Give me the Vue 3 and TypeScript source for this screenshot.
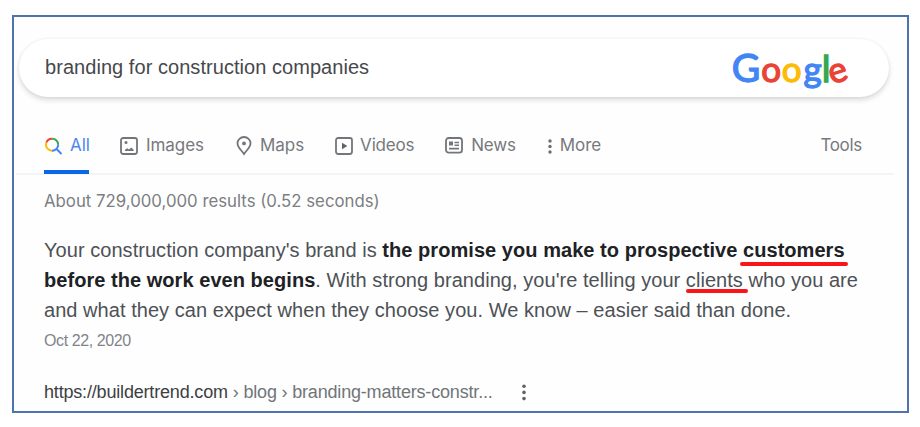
<script setup lang="ts">
interface Tab {
  id: string
  label: string
}

const query = 'branding for construction companies'

const tabs: Tab[] = [
  { id: 'all', label: 'All' },
  { id: 'images', label: 'Images' },
  { id: 'maps', label: 'Maps' },
  { id: 'videos', label: 'Videos' },
  { id: 'news', label: 'News' },
  { id: 'more', label: 'More' },
]
const active = 'all'

const logo: { ch: string; tone: string }[] = [
  { ch: 'G', tone: 'blue big' },
  { ch: 'o', tone: 'red' },
  { ch: 'o', tone: 'yellow' },
  { ch: 'g', tone: 'blue wide' },
  { ch: 'l', tone: 'green slim' },
  { ch: 'e', tone: 'red tilt' },
]
</script>

<template>
  <main class="frame">
    <header class="search">
      <span class="query">{{ query }}</span>
      <span class="logo"><span v-for="(l, i) in logo" :key="i" class="letter" :class="l.tone">{{ l.ch }}</span></span>
    </header>

    <nav class="tabs">
      <a v-for="t in tabs" :key="t.id" class="tab" :class="[t.id, { active: t.id === active }]">
        <svg v-if="t.id === 'all'" class="icon" width="18" height="18" viewBox="0 0 18 18" fill="none" stroke-width="2">
          <path d="M3.6 11.7A6 6 0 0 1 2.4 5.5" stroke="#fbbc04" />
          <path d="M2.4 5.5A6 6 0 0 1 8.2 1.7" stroke="#ea4335" />
          <path d="M8.2 1.7A6 6 0 0 1 14.2 7.7" stroke="#34a853" />
          <path d="M3.6 11.7A6 6 0 0 0 8 13.7" stroke="#fbbc04" />
          <path d="M8 13.7A6 6 0 0 0 14.2 7.7M12.3 11.8L17.5 17" stroke="#4285f4" />
        </svg>
        <svg v-else-if="t.id === 'images'" class="icon" width="18" height="18" viewBox="0 0 18 18">
          <rect x="1" y="1" width="16" height="16" rx="2.2" fill="none" stroke="#72767b" stroke-width="1.8" />
          <circle cx="6" cy="5.6" r="1.5" fill="#72767b" />
          <path d="M5 14V12.8L7.2 11.2L9 12.4L11.3 10.6L13.6 12.8V14Z" fill="#72767b" />
        </svg>
        <svg v-else-if="t.id === 'maps'" class="icon" width="16" height="20" viewBox="0 0 16 20">
          <path d="M8 18C5.8 14.3 1.5 11.8 1.5 7.3A6.5 6.3 0 0 1 14.5 7.3C14.5 11.8 10.2 14.3 8 18Z" fill="none" stroke="#72767b" stroke-width="1.8" />
          <circle cx="8" cy="7.4" r="1.9" fill="#72767b" />
        </svg>
        <svg v-else-if="t.id === 'videos'" class="icon" width="18" height="18" viewBox="0 0 18 18">
          <rect x="1" y="1" width="16" height="16" rx="2.2" fill="none" stroke="#72767b" stroke-width="1.8" />
          <path d="M7 5.8V12.2L12.3 9Z" fill="#5f6368" />
        </svg>
        <svg v-else-if="t.id === 'news'" class="icon" width="18" height="17" viewBox="0 0 18 17">
          <rect x="1" y="1" width="16" height="14.6" rx="2.6" fill="none" stroke="#72767b" stroke-width="1.8" />
          <path d="M4 4.6H8V8.6H4ZM9.5 4.8H14V6.2H9.5ZM9.5 7.6H14V9H9.5ZM4 10.8H14V12.4H4Z" fill="#72767b" />
        </svg>
        <svg v-else class="icon" width="4" height="15" viewBox="0 0 4 15" fill="#6b6f74">
          <circle cx="2" cy="2" r="1.7" /><circle cx="2" cy="7.5" r="1.7" /><circle cx="2" cy="13" r="1.7" />
        </svg>
        <span class="label">{{ t.label }}</span>
      </a>
      <a class="tools">Tools</a>
    </nav>

    <p class="stats">About 729,000,000 results (0.52 seconds)</p>

    <section class="snippet">
      <div class="line"><span>Your construction company's brand is </span><b>the promise you make to prospective <mark class="customers">customers</mark></b></div>
      <div class="line"><b>before the work even begins</b><span>. With strong branding, you're telling your <mark class="clients">clients</mark> who you are</span></div>
      <div class="line"><span>and what they can expect when they choose you. We know – easier said than done.</span></div>
    </section>
    <p class="date">Oct 22, 2020</p>

    <footer class="source">
      <span class="host">https://buildertrend.com</span>
      <span class="crumbs">› blog › branding-matters-constr...</span>
      <svg class="kebab" width="4" height="17" viewBox="0 0 4 17" fill="#5f6368">
        <circle cx="2" cy="2.2" r="1.8" /><circle cx="2" cy="8.4" r="1.8" /><circle cx="2" cy="14.6" r="1.8" />
      </svg>
    </footer>
  </main>
</template>

<style>
body {
  background: #fff;
}
</style>

<style scoped>
.frame {
  box-sizing: border-box;
  width: 897px;
  height: 398px;
  margin: 15px 0 0 12px;
  border: 2px solid #4f74ad;
  background: #fefefe;
  font-family: "Liberation Sans", Arial, sans-serif;
  white-space: nowrap;
  overflow: hidden;
}
p {
  margin: 0;
}
.search {
  box-sizing: border-box;
  display: flex;
  align-items: center;
  justify-content: space-between;
  width: 870px;
  height: 58px;
  margin: 22px 0 0 5px;
  padding: 0 41px 0 26px;
  border-radius: 29px;
  background: #fff;
  box-shadow: 0 3px 5px rgba(64, 60, 67, 0.18), 0 0 3px rgba(64, 60, 67, 0.07);
}
.query {
  font-size: 20px;
  letter-spacing: 0.05px;
  color: #46484c;
  padding-bottom: 2px;
}
.logo {
  display: flex;
  align-items: baseline;
  padding-bottom: 2px;
  font-family: Lato, sans-serif;
  font-size: 35px;
  line-height: 56px;
}
.letter {
  display: flex;
  justify-content: center;
  width: 20.5px;
  -webkit-text-stroke: 1.3px currentColor;
}
.letter.big {
  width: 30px;
  font-size: 39px;
}
.letter.wide {
  width: 21px;
}
.letter.slim {
  width: 6px;
  font-size: 37px;
}
.letter.tilt {
  width: 19px;
  transform: rotate(-18deg);
  transform-origin: 50% 62%;
}
.blue { color: #4285f4; }
.red { color: #ea4335; }
.yellow { color: #fbbc05; }
.green { color: #34a853; }
.tabs {
  display: flex;
  align-items: stretch;
  height: 43px;
  margin: 33px 13px 0 2px;
  padding-left: 28px;
  border-bottom: 2px solid #f3f4f5;
  font-family: Inter, sans-serif;
  font-size: 17px;
  letter-spacing: -0.05px;
  color: #77797d;
}
.tab {
  display: flex;
  align-items: flex-start;
  gap: 8px;
  box-sizing: border-box;
}
.icon {
  flex: none;
  margin-top: 7px;
}
.label,
.tools {
  line-height: 30px;
}
.active {
  width: 45px;
  height: 44px;
  border-bottom: 4px solid #0b66ea;
  color: #4f87f0;
}
.images { margin-left: 31px; }
.maps { margin-left: 32px; }
.videos { margin-left: 31px; gap: 7px; letter-spacing: -0.2px; }
.news { margin-left: 31px; letter-spacing: -0.2px; }
.more { margin-left: 32px; }
.maps .icon { margin-top: 6px; }
.more .icon { margin-top: 9px; }
.tools {
  margin-left: auto;
  margin-right: 32px;
  letter-spacing: -0.3px;
}
.stats {
  margin: 11px 0 0 30px;
  font-family: Inter, sans-serif;
  font-size: 16.8px;
  line-height: 30px;
  color: #7b7e83;
}
.snippet {
  margin: 19px 0 0 30px;
  font-size: 20px;
  letter-spacing: 0.047px;
  line-height: 30px;
  color: #4d5156;
}
.snippet b {
  color: #202124;
}
.line {
  height: 30px;
}
mark {
  position: relative;
  background: none;
  color: inherit;
}
mark::after {
  content: "";
  position: absolute;
  height: 4px;
  border-radius: 2px;
  background: #fb1419;
}
.customers::after { left: -3px; right: -3px; bottom: -5px; }
.clients::after { left: 0; right: -5px; bottom: -2px; }
.date {
  margin-left: 30px;
  font-size: 16px;
  letter-spacing: -0.4px;
  line-height: 32px;
  color: #80848a;
}
.source {
  display: flex;
  align-items: center;
  margin: 20px 0 0 30px;
  font-size: 18px;
  letter-spacing: -0.18px;
  line-height: 30px;
  color: #70757a;
}
.host {
  color: #3c4043;
}
.crumbs {
  margin-left: 5px;
  letter-spacing: -0.18px;
}
.kebab {
  margin-left: 29px;
}
</style>
